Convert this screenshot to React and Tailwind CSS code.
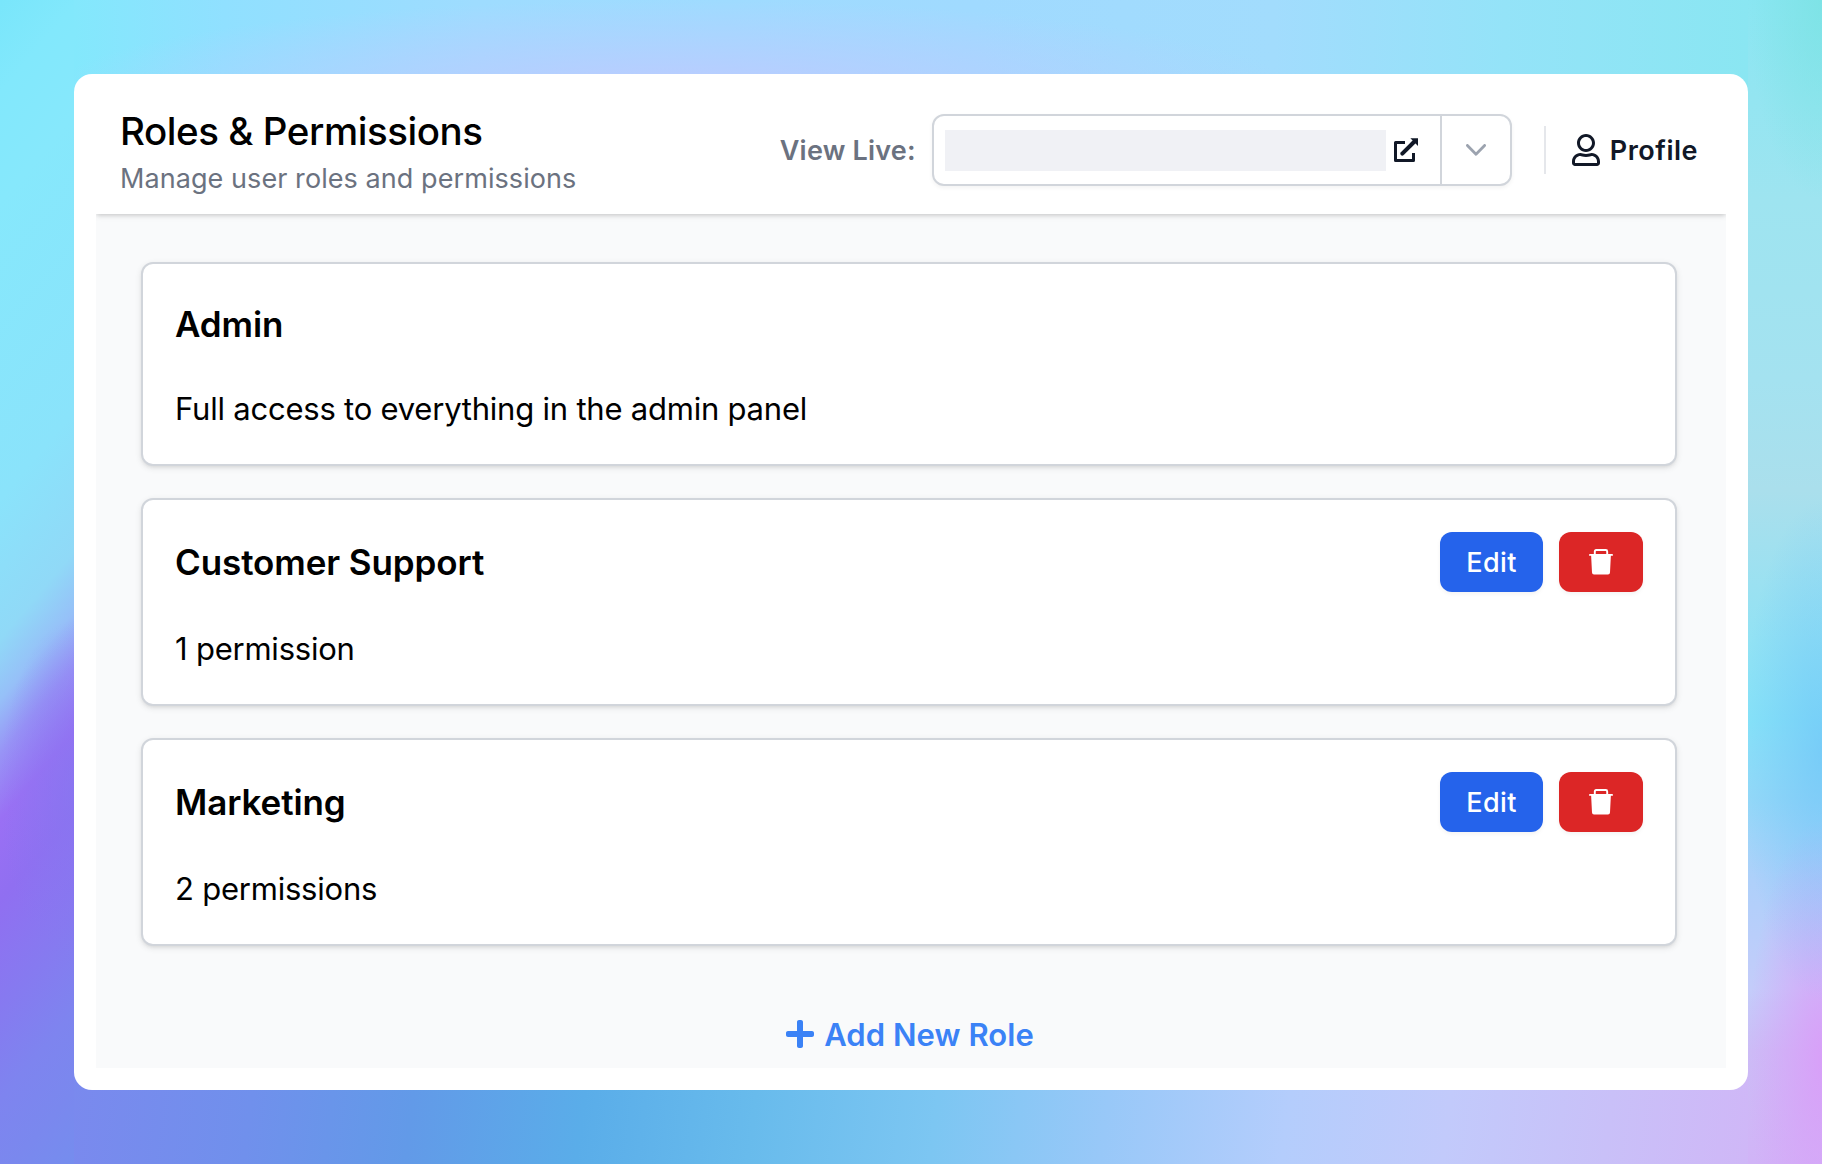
import React from "react";
import { FaRegUser, FaPlus } from "react-icons/fa";

const roles = [
  {
    name: "Admin",
    summary: "Full access to everything in the admin panel",
    locked: true,
  },
  { name: "Customer Support", summary: "1 permission" },
  { name: "Marketing", summary: "2 permissions" },
];

export default function App() {
  return (
    <div className="relative h-[1164px] w-[1822px] overflow-hidden p-[74px] font-['Inter',sans-serif] text-black">
      <Backdrop />
      <div className="relative h-[1016px] rounded-[18px] bg-white px-[22px] pt-3">
        <div className="flex h-[982px] flex-col overflow-hidden bg-[#f9fafb]">
          <Header />
          <main className="flex flex-1 flex-col pt-12 pr-[49px] pl-[45px]">
            <div className="flex flex-col gap-8">
              {roles.map((role) => (
                <RoleCard key={role.name} {...role} />
              ))}
            </div>
            <button className="mt-16 flex h-12 items-center justify-center gap-[10px] pl-0.5 text-[31px] font-semibold text-[#3b82f6]">
              <FaPlus size={32} className="w-7" />
              <span className="pt-0.5 leading-[48px] tracking-[0.05px]">Add New Role</span>
            </button>
          </main>
        </div>
      </div>
    </div>
  );
}

function Header() {
  return (
    <header className="relative flex h-32 shrink-0 items-center justify-between bg-white pr-7 pl-6 shadow-[0_2px_6px_rgba(0,0,0,0.1),0_2px_4px_-1px_rgba(0,0,0,0.12)]">
      <div className="pt-0.5">
        <h1 className="text-[38.5px] leading-[48px] font-medium tracking-[-0.45px]">
          Roles &amp; Permissions
        </h1>
        <p className="mt-2 text-[27px] leading-8 tracking-[0.07px] text-[#6b7280]">
          Manage user roles and permissions
        </p>
      </div>

      <div className="flex items-center text-[27px] leading-10 font-semibold">
        <span className="mr-4 pt-px tracking-[0.2px] text-[#6b7280]">View Live:</span>
        <div className="flex h-[72px] w-[580px] rounded-xl border-2 border-[#d1d5db] bg-white shadow-[0_2px_4px_rgba(0,0,0,0.05)]">
          <a href="#live" className="flex flex-1 items-center pl-[11px]">
            <span className="h-[41px] w-[441px] bg-[#f0f1f5]" />
            <ExternalIcon className="ml-2" />
          </a>
          <button
            aria-label="Choose site"
            className="grid w-[70px] place-items-center border-l-2 border-[#d1d5db] text-[#9ca3af]"
          >
            <ChevronIcon />
          </button>
        </div>
        <div className="mr-[26px] ml-8 h-12 w-0.5 bg-[#e5e7eb]" />
        <a href="#profile" className="flex items-center gap-[10px] text-[#111827]">
          <FaRegUser size={32} className="w-7" />
          <span className="pt-px tracking-[0.5px]">Profile</span>
        </a>
      </div>
    </header>
  );
}

function RoleCard({ name, summary, locked = false }) {
  return (
    <section className="rounded-xl border-2 border-[#d1d5db] bg-white p-8 shadow-[0_2px_6px_rgba(0,0,0,0.1),0_2px_4px_-2px_rgba(0,0,0,0.1)]">
      <div className="flex items-center justify-between">
        <h2 className="text-[35px] leading-[56px] font-semibold tracking-[-0.1px]">
          {name}
        </h2>
        {!locked && (
          <div className="flex gap-4">
            <button className="h-[60px] w-[103px] rounded-xl bg-[#2563eb] pt-0.5 text-[27px] font-medium tracking-[0.4px] text-white shadow-[0_2px_4px_rgba(0,0,0,0.05)]">
              Edit
            </button>
            <button
              aria-label={`Delete ${name}`}
              className="grid h-[60px] w-[84px] place-items-center rounded-xl bg-[#dc2626] text-white shadow-[0_2px_4px_rgba(0,0,0,0.05)]"
            >
              <TrashIcon />
            </button>
          </div>
        )}
      </div>
      <p className="mt-[33px] -mb-px text-[31px] leading-[48px] tracking-[-0.22px]">{summary}</p>
    </section>
  );
}

/* ---- Icons ---- */
function ChevronIcon() {
  return (
    <svg width="20" height="12" viewBox="0 0 20 12" fill="none" stroke="currentColor">
      <path
        d="m1.4 1.4 8.6 8.8 8.6-8.8"
        strokeWidth="2.8"
        strokeLinecap="round"
        strokeLinejoin="round"
      />
    </svg>
  );
}

function ExternalIcon({ className = "" }) {
  return (
    <svg
      width="24"
      height="24"
      viewBox="0 0 24 24"
      fill="none"
      stroke="#111827"
      strokeWidth="3"
      className={className}
    >
      <path d="M11 4.5H1.5V22.5H19.5V15" strokeLinejoin="round" />
      <path d="M8.3 15.7 20 4" strokeWidth="4" strokeLinecap="round" />
      <path d="M16.4.3H24V8z" fill="#111827" stroke="none" />
    </svg>
  );
}

function TrashIcon() {
  return (
    <svg width="24" height="26" viewBox="0 0 24 26" fill="none" stroke="currentColor">
      <path d="M5.8 5.5V2.4Q5.8 1 7.2 1h9.6q1.4 0 1.4 1.4v3.1" strokeWidth="1.9" />
      <path d="M.9 5.9h22.2" strokeWidth="1.8" strokeLinecap="round" />
      <path
        d="M2.1 6h19.8L21 23.6a2 2 0 0 1-2 1.9H5a2 2 0 0 1-2-1.9z"
        fill="currentColor"
        stroke="none"
      />
    </svg>
  );
}

/* soft colour wash that frames the window, one strip per side */
function Backdrop() {
  return (
    <div className="absolute inset-0 flex">
      <div className="w-[74px] bg-[radial-gradient(ellipse_74px_170px_at_100%_790px,#8677f0b0_0%,#8677f000_100%),linear-gradient(130deg,#79e6fb_0px,#82e8fc_60px,#86e8fc_129px,#8ae3fb_321px,#90d9f7_411px,#96c0f8_450px,#9894f6_485px,#9a70f4_527px,#906ff1_579px,#867af0_649px,#7e84ef_707px,#7a88ee_758px,#758dee_805px)]" />
      <div className="flex flex-1 flex-col justify-between bg-white">
        <div className="h-24 bg-[radial-gradient(ellipse_620px_90px_at_600px_90px,#bccbff_0%,#bccbff00_100%),linear-gradient(90deg,#83e8fc_0px,#90e0ff_150px,#9edcff_400px,#a0daff_900px,#a2dcfd_1200px,#94e3f8_1430px,#8ae6f2_1674px)]" />
        <div className="h-24 bg-[linear-gradient(97deg,#7a89ee_0px,#7090ec_180px,#629ae8_340px,#5aade9_510px,#68bbec_680px,#7cc6f2_860px,#98c8f8_1030px,#b4cdfc_1210px,#c2cafb_1370px,#c9c0f8_1530px,#d0b6f7_1690px)]" />
      </div>
      <div className="w-[74px] bg-[radial-gradient(ellipse_74px_200px_at_100%_0px,#7ae2e2c0_0%,#7ae2e200_100%),radial-gradient(ellipse_80px_250px_at_100%_750px,#6cc2f8a0_0%,#6cc2f800_100%),radial-gradient(ellipse_74px_240px_at_100%_1060px,#d8a0f8_0%,#d8a0f800_100%),linear-gradient(180deg,#8ae6f2_0px,#9ee4f0_200px,#a4e2f0_380px,#aadfec_490px,#92e2f4_640px,#86e2f8_720px,#94d8f8_800px,#aed0fa_880px,#c4ccfa_990px,#ccbcf6_1050px,#d1b4f7_1164px)]" />
    </div>
  );
}
